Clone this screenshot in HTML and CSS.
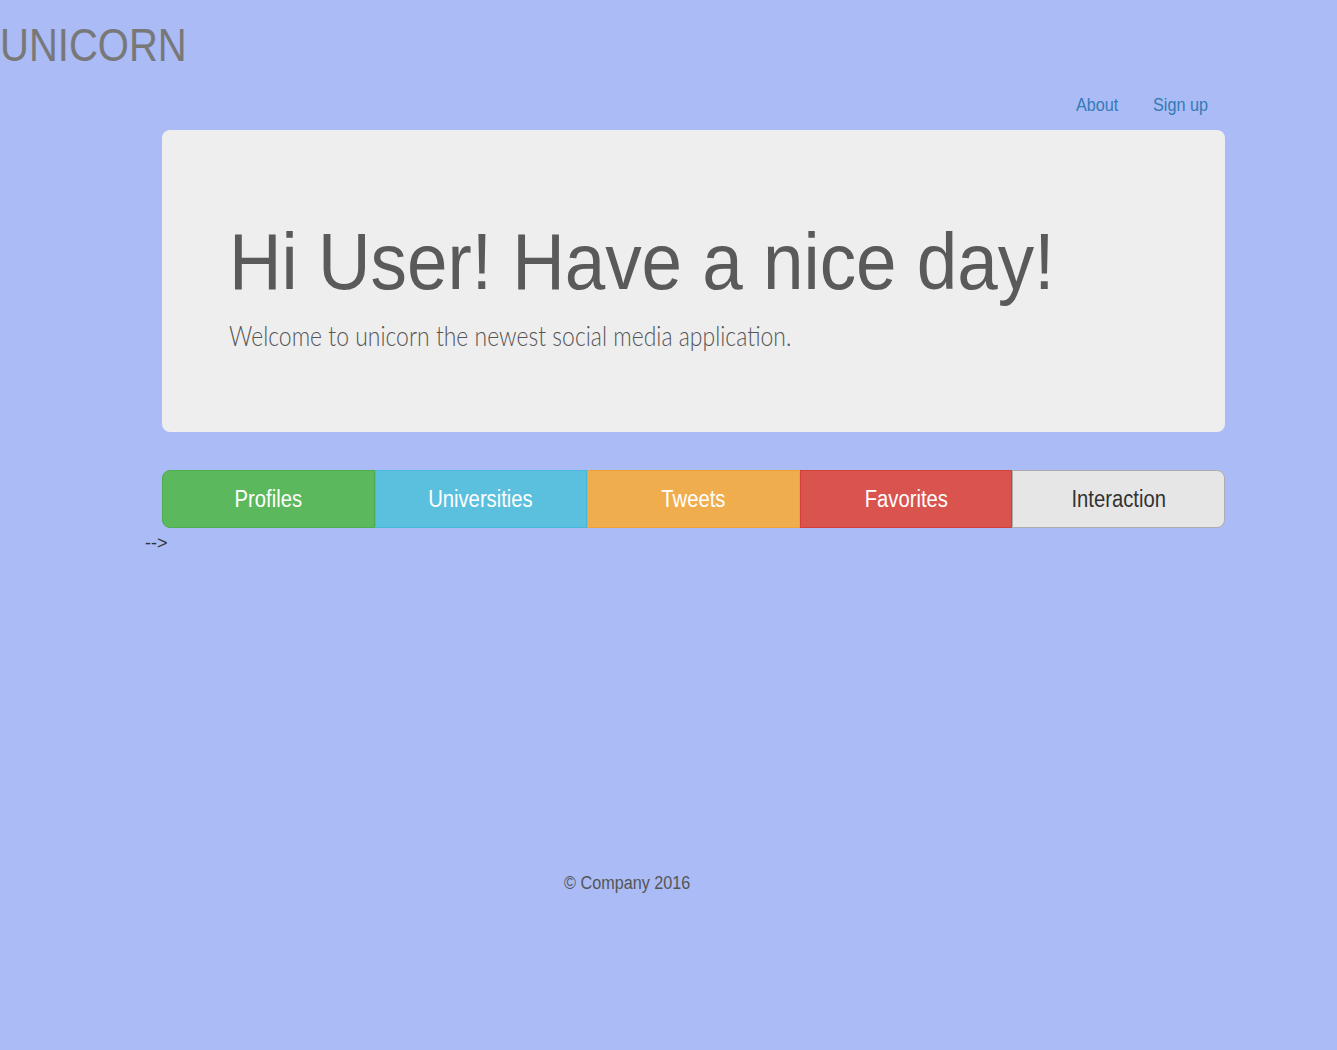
FILE: index.html
```html
<!DOCTYPE html>
<html>
<head>
<meta charset="utf-8">
<link rel="stylesheet" href="styles.css">
</head>
<body>
<header class="top">
  <h1 class="brand"><span class="sq">UNICORN</span></h1>
</header>
<div class="main">
  <nav class="nav">
    <a href="#"><span class="sq">About</span></a>
    <a href="#"><span class="sq">Sign up</span></a>
  </nav>
  <section class="jumbo">
    <h2 class="hello"><span class="sq">Hi User! Have a nice day!</span></h2>
    <p class="lead"><span class="sq">Welcome to unicorn the newest social media application.</span></p>
  </section>
  <div class="btns">
    <a class="btn green" href="#"><span class="sqc">Profiles</span></a>
    <a class="btn blue" href="#"><span class="sqc">Universities</span></a>
    <a class="btn orange" href="#"><span class="sqc">Tweets</span></a>
    <a class="btn red" href="#"><span class="sqc">Favorites</span></a>
    <a class="btn grey" href="#"><span class="sqc">Interaction</span></a>
  </div>
  <div class="arrow">--&gt;</div>
</div>
<footer class="foot"><span class="sq">© Company 2016</span></footer>
</body>
</html>
```
FILE: styles.css
```css
html, body {
  margin: 0;
  padding: 0;
  background: #aabbf5;
  font-family: "Liberation Sans", Arial, sans-serif;
  color: #333;
}
.sq {
  display: inline-block;
  transform-origin: left center;
}
.sqc {
  display: inline-block;
  transform: scaleX(0.88);
  transform-origin: center;
}
.top {
  height: 86px;
}
.brand {
  margin: 0;
  padding-top: 20px;
  font-size: 46px;
  line-height: 50px;
  font-weight: normal;
  color: #787878;
}
.brand .sq { transform: scaleX(0.87); }
.main {
  width: 1063px;
  margin-left: 162px;
}
.nav {
  display: flex;
  justify-content: flex-end;
  gap: 30px;
  padding-right: 11px;
  height: 44px;
}
.nav a {
  color: #337ab7;
  text-decoration: none;
  font-size: 18px;
  line-height: 38px;
}
.nav .sq { transform: scaleX(0.9); }
.jumbo {
  background: #eee;
  border-radius: 8px;
  height: 302px;
  box-sizing: border-box;
  padding: 88px 67px 0;
}
.hello {
  margin: 0;
  font-size: 80px;
  line-height: 88px;
  font-weight: normal;
  color: #5a5a5a;
}
.hello .sq { transform: scaleX(0.91); }
.lead {
  margin: 13px 0 0;
  font-family: Lato, "Liberation Sans", sans-serif;
  font-size: 27px;
  line-height: 34px;
  font-weight: 300;
  color: #555;
}
.lead .sq { transform: scaleX(0.85); }
.btns {
  display: flex;
  margin-top: 38px;
  height: 58px;
}
.btn {
  flex: 1;
  display: flex;
  align-items: center;
  justify-content: center;
  font-size: 23px;
  color: #fff;
  text-decoration: none;
  border: 1px solid transparent;
}
.btn:first-child {
  border-radius: 8px 0 0 8px;
}
.btn:last-child {
  border-radius: 0 8px 8px 0;
}
.green { background: #5cb85c; border-color: #4cae4c; }
.blue { background: #5bc0de; border-color: #46b8da; }
.orange { background: #f0ad4e; border-color: #eea236; }
.red { background: #d9534f; border-color: #d43f3a; }
.grey { background: #e6e6e6; border-color: #adadad; color: #333; }
.arrow {
  margin-left: -17px;
  font-size: 18px;
  line-height: 30px;
  color: #333;
}
.foot {
  margin-top: 315px;
  padding-left: 564px;
  font-size: 18px;
  color: #555;
}
.foot .sq { transform: scaleX(0.9); }
```
